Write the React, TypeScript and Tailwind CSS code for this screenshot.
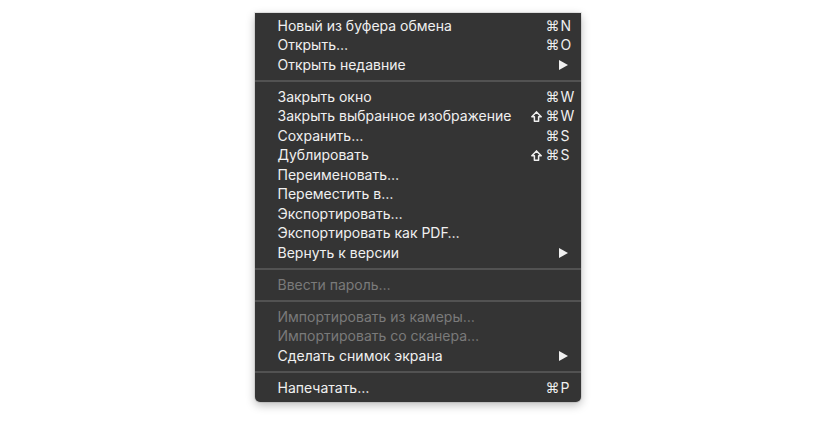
import React from "react";

type Item =
  | { type: "sep" }
  | { type: "item"; label: string; shift?: boolean; key?: string; arrow?: boolean; disabled?: boolean };

const items: Item[] = [
  { type: "item", label: "Новый из буфера обмена", key: "N" },
  { type: "item", label: "Открыть…", key: "O" },
  { type: "item", label: "Открыть недавние", arrow: true },
  { type: "sep" },
  { type: "item", label: "Закрыть окно", key: "W" },
  { type: "item", label: "Закрыть выбранное изображение", shift: true, key: "W" },
  { type: "item", label: "Сохранить…", key: "S" },
  { type: "item", label: "Дублировать", shift: true, key: "S" },
  { type: "item", label: "Переименовать…" },
  { type: "item", label: "Переместить в…" },
  { type: "item", label: "Экспортировать…" },
  { type: "item", label: "Экспортировать как PDF…" },
  { type: "item", label: "Вернуть к версии", arrow: true },
  { type: "sep" },
  { type: "item", label: "Ввести пароль…", disabled: true },
  { type: "sep" },
  { type: "item", label: "Импортировать из камеры…", disabled: true },
  { type: "item", label: "Импортировать со сканера…", disabled: true },
  { type: "item", label: "Сделать снимок экрана", arrow: true },
  { type: "sep" },
  { type: "item", label: "Напечатать…", key: "P" },
];

function ShiftIcon() {
  return (
    <svg width="11" height="11" viewBox="0 0 11 11" className="mr-[4px]">
      <path
        d="M5.5 0.9 L10.2 5.8 L7.6 5.8 L7.6 10.2 L3.4 10.2 L3.4 5.8 L0.8 5.8 Z"
        fill="none"
        stroke="#f0f0f0"
        strokeWidth="1.5"
        strokeLinejoin="round"
      />
    </svg>
  );
}

export default function App() {
  return (
    <div className="w-[835px] h-[424px] bg-white flex justify-center items-start pt-[13px]">
      <div
        className="w-[326px] bg-[#343434] rounded-b-[5px] pt-[3px] pb-[4px] shadow-[0_3px_10px_rgba(0,0,0,0.28),0_0_0_1px_rgba(0,0,0,0.08)] text-[14px] leading-none text-[#f0f0f0]"
        style={{ fontFamily: 'Inter, "DejaVu Sans", sans-serif' }}
      >
        {items.map((it, i) =>
          it.type === "sep" ? (
            <div key={i} className="h-[12.5px] flex items-center">
              <div className="w-full h-[2px] bg-[#525252]" />
            </div>
          ) : (
            <div
              key={i}
              className={`h-[19.5px] flex items-center pl-[23px] pr-[4px] ${
                it.disabled ? "text-[#7a7a7a]" : "text-[#f0f0f0]"
              }`}
            >
              <span className="flex-1">{it.label}</span>
              {it.key ? (
                <span className="flex items-center">
                  {it.shift ? <ShiftIcon /> : null}
                  <span
                    className="text-[14px]"
                    style={{ fontFamily: '"DejaVu Sans", sans-serif' }}
                  >
                    ⌘
                  </span>
                  <span className="w-[16px] ml-[1px]">{it.key}</span>
                </span>
              ) : null}
              {it.arrow ? (
                <svg width="9" height="10" viewBox="0 0 9 10" className="mr-[9px]">
                  <path d="M0 0 L9 5 L0 10 Z" fill="#f0f0f0" />
                </svg>
              ) : null}
            </div>
          )
        )}
      </div>
    </div>
  );
}
